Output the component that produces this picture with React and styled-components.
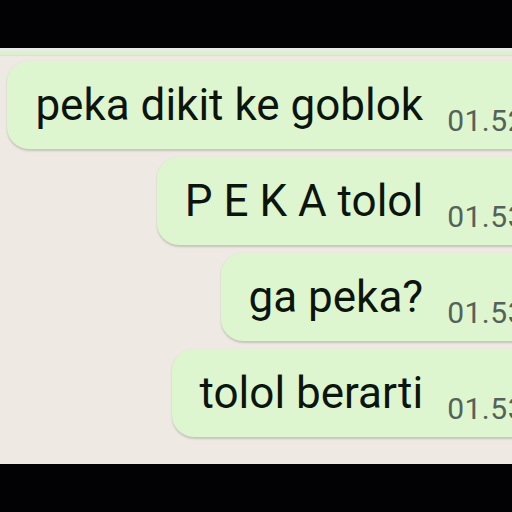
import styled, { createGlobalStyle } from 'styled-components';

const GlobalStyle = createGlobalStyle`
  html, body {
    margin: 0;
    padding: 0;
    background: #000;
  }
`;

const Screen = styled.div`
  width: 512px;
  height: 512px;
  display: flex;
  flex-direction: column;
  overflow: hidden;
  background: #000;
  font-family: Roboto, "Noto Sans", sans-serif;
`;

const BlackBar = styled.div`
  height: 48px;
  flex-shrink: 0;
  background: #020204;
`;

const ChatArea = styled.div`
  height: 416px;
  flex-shrink: 0;
  display: flex;
  flex-direction: column;
  align-items: flex-end;
  gap: 8px;
  background: #efe9e4;
  border-top: 3px solid #e8ebe6;
  box-sizing: border-box;
  margin-right: -53px;
`;

const PrevBubbleEdge = styled.div`
  align-self: stretch;
  height: 4px;
  margin-bottom: -2px;
  background: #dcefcf;
  box-shadow: 0 1px 1px rgba(0, 0, 0, 0.06);
`;

const Bubble = styled.div`
  height: 88px;
  box-sizing: border-box;
  display: flex;
  align-items: flex-start;
  gap: 24px;
  padding: 0 40px 0 28px;
  background: #def6cf;
  border-radius: 22px;
  box-shadow: 0 1.5px 2px rgba(90, 110, 80, 0.28);
`;

const Text = styled.span`
  margin-top: 19px;
  font-size: 44px;
  line-height: 50px;
  color: #0c150d;
  white-space: nowrap;
`;

const Time = styled.span`
  margin-top: 43px;
  font-size: 30px;
  line-height: 34px;
  letter-spacing: 0.5px;
  color: #55625a;
  white-space: nowrap;
`;

const messages = [
  { text: 'peka dikit ke goblok', time: '01.52' },
  { text: 'P E K A tolol', time: '01.53' },
  { text: 'ga peka?', time: '01.53' },
  { text: 'tolol berarti', time: '01.53' },
];

export default function App() {
  return (
    <Screen>
      <GlobalStyle />
      <BlackBar />
      <ChatArea>
        <PrevBubbleEdge />
        {messages.map((m, i) => (
          <Bubble key={i}>
            <Text>{m.text}</Text>
            <Time>{m.time}</Time>
          </Bubble>
        ))}
      </ChatArea>
      <BlackBar />
    </Screen>
  );
}
